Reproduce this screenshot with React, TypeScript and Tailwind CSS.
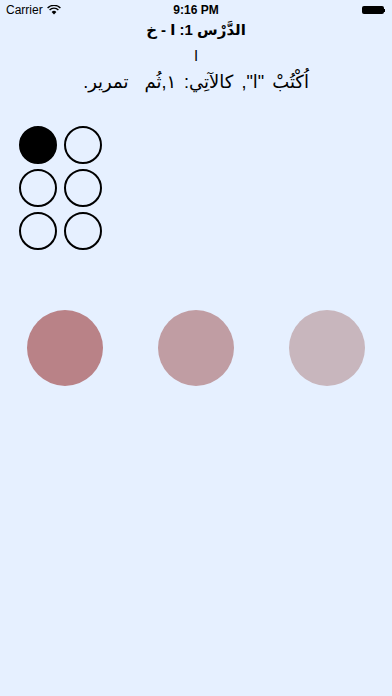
import React from 'react';

const font = { fontFamily: '"Liberation Sans", "DejaVu Sans", sans-serif' };

function StatusBar() {
  return (
    <div className="relative h-5 flex items-center justify-between px-[6px] text-[12px] text-black">
      <div className="flex items-center gap-[4px]">
        <span>Carrier</span>
        <svg width="14" height="10" viewBox="0 0 14 10">
          <path d="M7 9.5 L4.6 6.9 A3.4 3.4 0 0 1 9.4 6.9 Z" fill="black" />
          <path d="M2.6 5 A6.2 6.2 0 0 1 11.4 5" stroke="black" strokeWidth="1.4" fill="none" />
          <path d="M0.6 3 A9 9 0 0 1 13.4 3" stroke="black" strokeWidth="1.4" fill="none" />
        </svg>
      </div>
      <span className="absolute left-0 right-0 text-center font-bold">9:16 PM</span>
      <div className="flex items-center pr-[1px]">
        <div className="w-[22px] h-[8px] bg-black rounded-[2px]" />
        <div className="w-[1.5px] h-[3px] bg-black" />
      </div>
    </div>
  );
}

function Dot({ filled }: { filled?: boolean }) {
  return (
    <div
      className={`w-[38px] h-[38px] rounded-full border-2 border-black ${filled ? 'bg-black' : ''}`}
    />
  );
}

export default function App() {
  const cells = [true, false, false, false, false, false];
  const colors = ['bg-[#b98287]', 'bg-[#c09da3]', 'bg-[#c8b6bd]'];

  return (
    <div className="w-[392px] h-[696px] bg-[#e6f0ff] overflow-hidden" style={font}>
      <StatusBar />

      <div dir="rtl" className="flex flex-col items-center text-black">
        <div className="text-[15px] font-bold leading-[20px]">الدَّرْس 1: ا - خ</div>
        <div className="mt-[5px] text-[15px] leading-[22px]">ا</div>
        <div className="mt-[3px] text-[18px] leading-[24px] [word-spacing:3px]">اُكْتُبْ "ا", كالآتِي: ١,ثُم&nbsp;&nbsp;تمرير.</div>
      </div>

      <div className="mt-[32px] ml-[19px] grid grid-cols-[38px_38px] gap-x-[7px] gap-y-[5px] w-fit">
        {cells.map((f, i) => (
          <Dot key={i} filled={f} />
        ))}
      </div>

      <div className="mt-[60px] flex justify-around">
        {colors.map((c, i) => (
          <div key={i} className={`w-[76px] h-[76px] rounded-full ${c}`} />
        ))}
      </div>
    </div>
  );
}
